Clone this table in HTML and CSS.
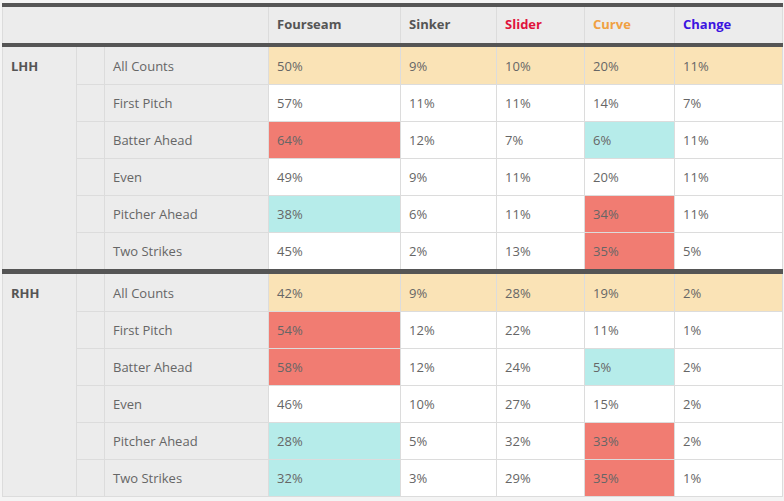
FILE: index.html
```html
<!DOCTYPE html>
<html lang="en">
<head>
<meta charset="utf-8">
<title>Pitch Mix by Count</title>
<link rel="stylesheet" href="styles.css">
</head>
<body>
<table class="mix">
  <colgroup>
    <col class="c-hand"><col class="c-gap"><col class="c-count">
    <col class="c-fs"><col class="c-si"><col class="c-sl"><col class="c-cu"><col class="c-ch">
  </colgroup>
  <thead>
    <tr>
      <th class="lbl" colspan="3"></th>
      <th class="lbl">Fourseam</th>
      <th class="lbl">Sinker</th>
      <th class="lbl slider">Slider</th>
      <th class="lbl curve">Curve</th>
      <th class="lbl change">Change</th>
    </tr>
  </thead>
  <tbody class="first">
    <tr class="all">
      <th class="hand" rowspan="6">LHH</th><td class="side"></td><td class="side">All Counts</td>
      <td>50%</td><td>9%</td><td>10%</td><td>20%</td><td>11%</td>
    </tr>
    <tr><td class="side"></td><td class="side">First Pitch</td>
      <td>57%</td><td>11%</td><td>11%</td><td>14%</td><td>7%</td></tr>
    <tr><td class="side"></td><td class="side">Batter Ahead</td>
      <td class="hi">64%</td><td>12%</td><td>7%</td><td class="lo">6%</td><td>11%</td></tr>
    <tr><td class="side"></td><td class="side">Even</td>
      <td>49%</td><td>9%</td><td>11%</td><td>20%</td><td>11%</td></tr>
    <tr><td class="side"></td><td class="side">Pitcher Ahead</td>
      <td class="lo">38%</td><td>6%</td><td>11%</td><td class="hi">34%</td><td>11%</td></tr>
    <tr><td class="side"></td><td class="side">Two Strikes</td>
      <td>45%</td><td>2%</td><td>13%</td><td class="hi">35%</td><td>5%</td></tr>
  </tbody>
  <tbody class="group">
    <tr class="all">
      <th class="hand" rowspan="6">RHH</th><td class="side"></td><td class="side">All Counts</td>
      <td>42%</td><td>9%</td><td>28%</td><td>19%</td><td>2%</td>
    </tr>
    <tr><td class="side"></td><td class="side">First Pitch</td>
      <td class="hi">54%</td><td>12%</td><td>22%</td><td>11%</td><td>1%</td></tr>
    <tr><td class="side"></td><td class="side">Batter Ahead</td>
      <td class="hi">58%</td><td>12%</td><td>24%</td><td class="lo">5%</td><td>2%</td></tr>
    <tr><td class="side"></td><td class="side">Even</td>
      <td>46%</td><td>10%</td><td>27%</td><td>15%</td><td>2%</td></tr>
    <tr><td class="side"></td><td class="side">Pitcher Ahead</td>
      <td class="lo">28%</td><td>5%</td><td>32%</td><td class="hi">33%</td><td>2%</td></tr>
    <tr><td class="side"></td><td class="side">Two Strikes</td>
      <td class="lo">32%</td><td>3%</td><td>29%</td><td class="hi">35%</td><td>1%</td></tr>
  </tbody>
</table>
</body>
</html>
```
FILE: styles.css
```css
html, body {
  margin: 0;
  background: #f4f4f4;
}
body {
  padding: 3px 0 0 2px;
  font-family: "Open Sans", "Liberation Sans", sans-serif;
  font-size: 13px;
  color: #666;
}
.mix {
  border-collapse: collapse;
  table-layout: fixed;
  width: 780px;
  border: 1px solid #dcdcdc;
  border-top: 4px solid #555;
  background: #fff;
}
.c-hand { width: 74px; }
.c-gap { width: 28px; }
.c-count { width: 164px; }
.c-fs { width: 132px; }
.c-si { width: 96px; }
.c-sl { width: 88px; }
.c-cu { width: 90px; }
.c-ch { width: 108px; }

.mix th, .mix td {
  border: 1px solid #dcdcdc;
  padding: 8px 8px;
  height: 20px;
  line-height: 20px;
  text-align: left;
  vertical-align: middle;
  white-space: nowrap;
}
.mix thead th {
  background: #ececec;
  border-top: none;
  border-bottom: 4px solid #555;
  font-weight: 700;
  color: #555;
  padding: 7px 8px 9px;
}
.lbl.slider { color: #e0133c; }
.lbl.curve { color: #f0a042; }
.lbl.change { color: #3b14e0; }

.mix th.hand {
  background: #ececec;
  vertical-align: top;
  font-weight: 700;
  color: #555;
}
.mix td.side {
  background: #ececec;
  color: #666;
}
.first tr:first-child td,
.first tr:first-child th {
  padding-top: 9px;
  padding-bottom: 8px;
}
.group tr:first-child th,
.group tr:first-child td {
  padding-top: 9px;
  border-top: 5px solid #555;
}
.all td { background: #fae3b6; }
.all td.side { background: #ececec; }
.mix td.hi { background: #f17c72; }
.mix td.lo { background: #b6ecea; }
```
